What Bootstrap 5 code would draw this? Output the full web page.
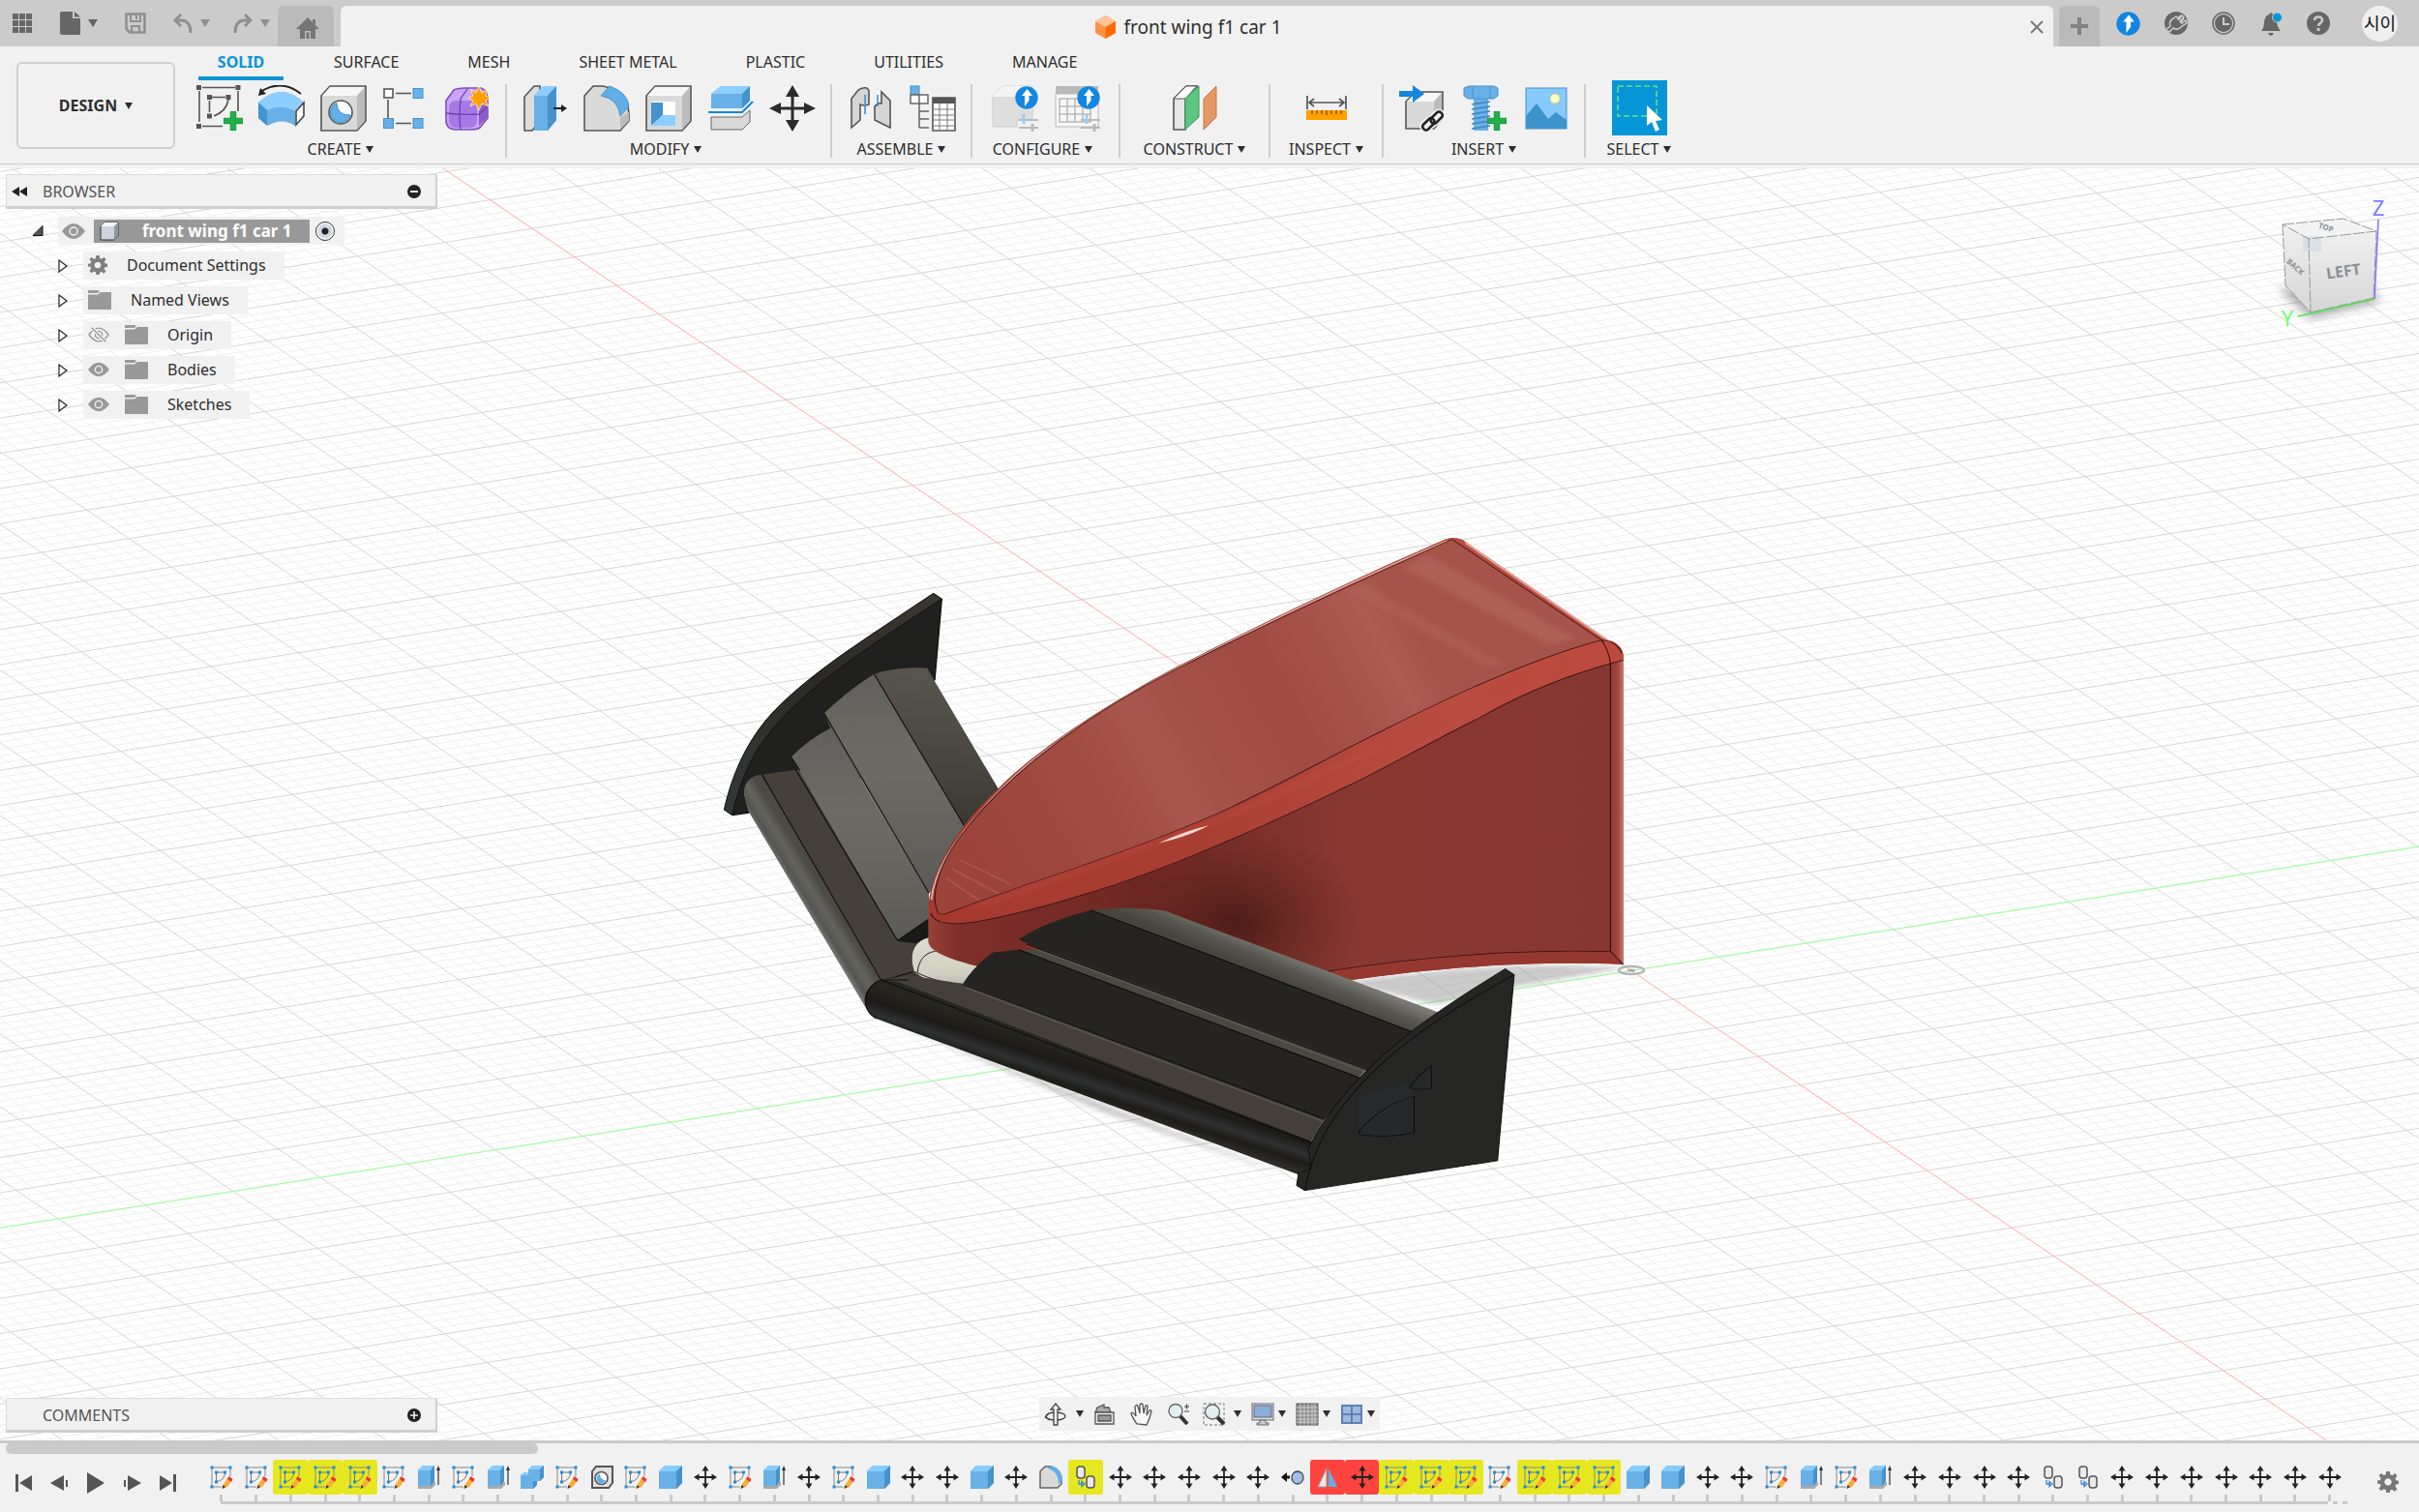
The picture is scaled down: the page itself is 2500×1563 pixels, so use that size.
<!DOCTYPE html>
<html lang="en">
<head>
<meta charset="utf-8">
<meta name="viewport" content="width=device-width, initial-scale=1">
<title>front wing f1 car 1</title>
<link href="https://cdn.jsdelivr.net/npm/bootstrap@5.3.0/dist/css/bootstrap.min.css" rel="stylesheet">
<style>
body{font-family:"Noto Sans","Noto Sans CJK KR",sans-serif;font-size:16px;line-height:24px;color:#2e2e2e;background:#f1f1f1;overflow:hidden}
svg{display:block;flex:none}
button.plain{background:none;border:0;padding:0;color:inherit;display:flex;align-items:center;justify-content:center}
/* top bar */
.appbar{height:48px;background:#cbcbcb}
.appbar .tools{width:287px;padding:12px 0 12px 12px}
.appbar .hometab{width:58px;height:42px;background:#bababa;border-radius:6px 6px 0 0;padding:4px 0 0 4px}
.doctab{height:42px;background:#f1f1f1;border-radius:6px 6px 0 0;margin:0 6px 0 7px;padding:2px 0 0 9px;font-size:19px}
.appbar .newtab{width:42px;height:42px;background:#bababa;border-radius:6px 6px 0 0}
.sysicons{width:330px;padding:0 22px 0 17px}
.appbar .avatar{width:37px;height:37px;border-radius:50%;background:#efefef;font-size:18px;color:#111;white-space:nowrap}
.caret{font-size:12px;line-height:12px}
.caret::before{content:"";display:block;border:5px solid transparent;border-top:8px solid currentColor;border-bottom:0}
.caret.sm::before{border-width:7px 4px 0}
.dim{color:#8f8f8f!important}
/* ribbon */
.ribbon{height:122px;border-bottom:1px solid #cfcfcf;margin-bottom:4px}
.ribbon .workspace{width:164px;height:90px;margin:16px 10px 0 17px;border:2px solid #cfcfcf;border-radius:6px;font-weight:700;gap:8px}
.rtabs{margin-left:14px;gap:33px;height:35px}
.rtabs .nav-link{color:#2e2e2e;padding:4px 19px 3px;line-height:24px;height:35px;border-bottom:4px solid transparent;text-align:center}
.rtabs .nav-link.active{color:#0696d7;font-weight:700;border-color:#0696d7;min-width:88px}
.grp{height:80px;position:relative}
.grp+.grp{border-left:2px solid #cdcdcd;height:76px;margin-top:4px}
.grp+.grp .icons{margin-top:-4px}
.icons{height:57px}
.icons .plain{width:64px;height:57px}
.w-create{width:331px;padding-right:3px}.w-modify{width:336px}.w-pair{width:145px}.w-conf{width:153px}.w-cons{width:155px}.w-insp{width:117px}.w-ins{width:209px}.w-sel{width:112px}
.grp button.lbl{gap:5px;height:28px}
.w-create button.lbl,.w-modify button.lbl,.w-conf button.lbl{padding-right:6px}
.icons .selbox{width:57px;background:#0696d7}
/* canvas */
.canvas{background:#fff;min-height:0}
.scene{position:absolute;inset:0;width:100%;height:100%}
.panel-bar{width:446px;height:36px;background:#f1f1f1;border:1px solid #ddd;border-right:2px solid #cfcfcf;border-bottom:3px solid #cfcfcf;color:#555;padding:2px 15px 0 5px}
.browser{position:absolute;left:6px;top:6px}
.comments{position:absolute;left:6px;bottom:8px}
.tree{margin:8px 0 0;gap:7px}
.trow{height:29px}
.trow .exp{width:25px;margin-left:55px;padding-right:18px}
.trow .chip{background:#f1f1f1;height:29px;padding:0 19px 2px 5px}
.trow.root .exp{width:25px;margin-left:20px;padding:0}
.trow.root .chip{padding:0 10px 0 4px;margin-left:9px}
.rootname{background:#999;color:#fff;height:24px;width:223px;font-size:17px;font-weight:700;padding:0 0 0 6px;margin:0 6px 0 9px}
.rootname svg{margin-right:24px}
.act{appearance:none;width:20px;height:20px;margin:0;border-radius:50%;border:1px solid #333;background:radial-gradient(circle,#222 0 3px,#cfd6e6 4px 7px,#fff 8px)}
.nav-tools{position:absolute;left:50%;margin-left:-176px;bottom:10px;width:352px;height:35px;background:#f1f1f1;padding:0 5px 0 4px}
.viewcube{position:absolute;top:20px;right:20px}
/* timeline */
.timeline{height:74px;border-top:3px solid #cacaca}
.thumb{width:22%;height:11px;background:#cacaca;border-radius:5px;margin-left:6px}
.play{width:204px;padding:0 22px 0 16px;height:60px}
.track{margin-left:7px;padding-top:6px}
.cell{flex:1 1 0;min-width:0}
.cell .plain{width:100%;height:36px;border-radius:3px}
.cell button.warn{background:#e6e81f}
.cell button.fail{background:#ff4440}
.tick{width:3px;height:7px;background:#cacaca;margin:0 auto}
.rail{margin-left:17px;height:3px;gap:5px}
.rail i{background:#cacaca;width:5px}
.gearbox{width:74px;padding:0 21px 2px 0}
</style>
<script src="https://cdn.jsdelivr.net/npm/bootstrap@5.3.0/dist/js/bootstrap.bundle.min.js"></script>
</head>
<body class="d-flex flex-column vh-100">

<svg width="0" height="0" class="position-absolute" aria-hidden="true">
<defs>
<symbol id="t-sk" viewBox="0 0 24 24"><path d="M2 2H21V11M2 2V22H12" fill="none" stroke="#888" stroke-width="1"/><path d="M6.500 7H15.500Q15.500 15 6.500 17Z" fill="none" stroke="#777" stroke-width="1"/><g fill="#1a8fe3"><path d="M.5.5h3v3h-3zM19.500.5h3v3h-3zM.5 20.500h3v3h-3zM5 5.500h3v3H5zM14 5.500h3v3h-3zM5 15.500h3v3H5z"/></g><path d="M13 24L14 19L19 12L23 15L18 22Z" fill="#f8ae38"/><path d="M19.500 11l4 3-1.500 3-4-3z" fill="#e33"/><path d="M12.500 24l1-4 2.500 2z" fill="#333"/></symbol>
<symbol id="t-box" viewBox="0 0 24 24"><path d="M0 6L6 0H24V18L18 24H0Z" fill="#69b0e6"/><path d="M0 6L6 0H24L18 6Z" fill="#86ccff"/><path d="M24 0V18L18 24V6Z" fill="#4592cc"/></symbol>
<symbol id="t-ext" viewBox="0 0 24 24"><path d="M1 21l4-4h14v3l-4 4H1z" fill="#aaa"/><path d="M1 5L6 0H18V16L14 21H1Z" fill="#69b0e6"/><path d="M1 5L6 0H18L14 5Z" fill="#86ccff"/><path d="M18 0V16L14 21V5Z" fill="#4592cc"/><path d="M22 20V3" stroke="#333" stroke-width="1.200"/><path d="M22 0l2 5h-4z" fill="#333"/></symbol>
<symbol id="t-join" viewBox="0 0 24 24"><path d="M0 10L4 7H8V4L12 0H24V12L20 16H17V20L13 24H0Z" fill="#69b0e6"/><path d="M8 4L12 0H24L20 4ZM0 10L4 7H8V10Z" fill="#86ccff"/><path d="M24 0V12L20 16V4ZM17 16V20L13 24V16Z" fill="#4592cc"/></symbol>
<symbol id="t-hole" viewBox="0 0 24 24"><path d="M2 6L6 1H23V18L19 23H2Z" fill="#e0e0e0" stroke="#555" stroke-width="2"/><circle cx="11.500" cy="13" r="6.500" fill="#fff" stroke="#555" stroke-width="1.600"/><path d="M10 8.500Q10 14 16 15.500A5 5 0 1 1 10 8.500Z" fill="#62aee6"/></symbol>
<symbol id="t-fil" viewBox="0 0 24 24"><path d="M1 6L6 1H12Q23 4 23 15V19L19 23H1Z" fill="#dadada" stroke="#666" stroke-width="1.500"/><path d="M9 3L13 0Q24 4 24 15L20 19Q20 6 9 3Z" fill="#62aee6"/></symbol>
<symbol id="t-mv" viewBox="0 0 24 24"><path d="M12 3V21M3 12H21" stroke="#222" stroke-width="1.800"/><path d="M12 0l3.500 5.500h-7zM12 24l3.500-5.500h-7zM0 12l5.500-3.500v7zM24 12l-5.500-3.500v7z" fill="#222"/></symbol>
<symbol id="t-cp" viewBox="0 0 24 24"><g fill="#e9e9ee" stroke="#555" stroke-width="1.500"><rect x="3" y="1" width="8" height="12" rx="3"/><rect x="13" y="11" width="8" height="12" rx="3"/></g><path d="M5 15v4h4M8 16.500l3 2.500-3 2.500z" fill="none" stroke="#3a86d8" stroke-width="1.300"/></symbol>
<symbol id="t-al" viewBox="0 0 24 24"><path d="M9 12H3" stroke="#111" stroke-width="3"/><path d="M0 12l6-5v10z" fill="#111"/><ellipse cx="17" cy="12.500" rx="6" ry="6.500" fill="#a3bfe8" stroke="#445" stroke-width="1.300"/></symbol>
<symbol id="t-mir" viewBox="0 0 24 24"><path d="M11 3V22H2Z" fill="#e8e8e8" stroke="#999"/><path d="M13 3V22H22Z" fill="#62aee6"/></symbol>
<symbol id="i-eye" viewBox="0 0 24 16"><path d="M0 8Q12-8 24 8Q12 24 0 8Z" fill="#999"/><circle cx="12" cy="8" r="4" fill="none" stroke="#f1f1f1" stroke-width="1.500"/></symbol>
<symbol id="i-hid" viewBox="0 0 24 16"><path d="M1 8Q12-7 23 8Q12 23 1 8Z" fill="none" stroke="#999" stroke-width="1.500"/><circle cx="12" cy="8" r="4" fill="none" stroke="#999" stroke-width="1.500"/><path d="M4 0L20 16" stroke="#f1f1f1" stroke-width="4"/><path d="M4 0L20 16" stroke="#999" stroke-width="1.500"/></symbol>
<symbol id="i-fold" viewBox="0 0 24 20"><path d="M0 4.500H10L13 2H24V20H0Z" fill="#999"/><path d="M0 0H10L12 1L10 3H0Z" fill="#999"/></symbol>
<symbol id="i-gear" viewBox="0 0 24 24"><path fill-rule="evenodd" d="M10 0h4l.6 3.600 2.100.9L19.700 2.300l2.600 2.600-2.100 3 .8 2.100 3 .6v3.600l-3.200.6-.8 2.100 2.200 3-2.600 2.600-3-2.100-2.100.9L14 24h-4l-.6-3.300-2.100-.9-3 2.100-2.600-2.600 2.200-3-.8-2.100L0 14v-3.600l3.100-.6.8-2.100-2.200-3L4.300 2.100l3 2.300 2.100-.9ZM12 8a4 4 0 1 0 .01 0Z"/></symbol>
<symbol id="i-up" viewBox="0 0 24 24"><circle cx="12" cy="12" r="11.700" fill="#1286e0"/><path d="M12.500 3L18 10H14.500V15L10 21V10H7Z" fill="#fff"/></symbol>
<symbol id="i-exp" viewBox="0 0 10 14"><path d="M1 1V13L9 7Z" fill="#fff" stroke="#222" stroke-width="1.200"/></symbol>
<symbol id="i-plus" viewBox="0 0 22 22"><path d="M8 0h6v8h8v6h-8v8H8v-8H0V8h8z" fill="#20b04b" stroke="#138a35"/></symbol>
</defs></svg>

<header class="appbar d-flex align-items-end">
  <div class="tools d-flex align-items-center h-100">
    <button class="plain" aria-label="Data panel"><svg width="22" height="22" fill="#666"><path d="M1 1h6v6H1zM8 1h6v6H8zM15 1h6v6h-6zM1 8h6v6H1zM8 8h6v6H8zM15 8h6v6h-6zM1 15h6v6H1zM8 15h6v6H8zM15 15h6v6h-6z"/></svg></button>
    <button class="plain ms-4 gap-2 text-black-50" aria-label="File"><svg class="ms-1" width="21" height="24" fill="#666"><path d="M2 0H13V7H21V24H2Q0 24 0 22V2Q0 0 2 0Z"/><path d="M15 0L21 5.500H15Z"/></svg><span class="caret"></span></button>
    <button class="plain ms-4" aria-label="Save"><svg class="ms-1" width="22" height="22" fill="none" stroke="#8f8f8f" stroke-width="2.500"><path d="M1.500 1.500H20.500V20.500H5L1.500 17Z"/><path d="M6 2V9H16V2M7 20V14H15V20M12 3V7" stroke-width="2"/></svg></button>
    <button class="plain dim ms-4" aria-label="Undo"><svg class="ms-1 me-2" width="20" height="20" fill="none" stroke="#8f8f8f" stroke-width="3"><path d="M8 1L2 7L8 13M2 7H9Q18 8 18 20"/></svg><span class="caret"></span></button>
    <button class="plain dim ms-4" aria-label="Redo"><svg class="me-2" width="20" height="20" fill="none" stroke="#8f8f8f" stroke-width="3"><path d="M12 1L18 7L12 13M18 7H11Q2 8 2 20"/></svg><span class="caret"></span></button>
  </div>
  <button class="plain hometab" aria-label="Home"><svg width="24" height="22" fill="#757575"><path d="M12 0L24 12H20V22H15V14H9V22H4V12H0Z"/><path d="M17 2h3v6l-3-3z"/><path d="M10.500 15.500h3V22h-3z"/></svg></button>
  <div class="doctab flex-fill d-flex align-items-center">
    <div class="flex-fill d-flex align-items-center justify-content-center gap-2"><svg width="21" height="24"><path d="M10.500 0L21 6V18L10.500 24L0 18V6Z" fill="#ff9248"/><path d="M10.500 0L21 6L10.500 12L0 6Z" fill="#ffc49c"/><path d="M21 6V18L10.500 24V12Z" fill="#ff6a00"/></svg><span>front wing f1 car 1</span></div>
    <button class="plain me-2" aria-label="Close"><svg width="18" height="18" stroke="#777" stroke-width="2"><path d="M3 3L15 15M15 3L3 15"/></svg></button>
  </div>
  <button class="plain newtab" aria-label="New tab"><svg width="20" height="20" fill="#828282"><path d="M8 1h4v7h7v4h-7v7H8v-7H1V8h7z"/></svg></button>
  <div class="sysicons d-flex align-items-center justify-content-between h-100">
    <button class="plain" aria-label="Updates"><svg width="25" height="25"><use href="#i-up"/></svg></button>
    <button class="plain" aria-label="Extensions"><svg width="24" height="24"><circle cx="12" cy="12" r="12" fill="#666"/><path d="M12 5L15 8L18 4L20 6L16 10L18 12L22 9L23 12L18 15Q14 20 9 17L5 21L1 19L6 15Q4 10 9 7Z" fill="none" stroke="#cbcbcb" stroke-width="1.500"/><path d="M13 8L17 4M16 11L20 7" stroke="#cbcbcb" stroke-width="2"/></svg></button>
    <button class="plain" aria-label="Job status"><svg width="24" height="24"><circle cx="12" cy="12" r="11" fill="none" stroke="#666" stroke-width="1.500"/><circle cx="12" cy="12" r="9" fill="#666"/><path d="M12 6V13H18" fill="none" stroke="#cbcbcb" stroke-width="2"/></svg></button>
    <button class="plain" aria-label="Notifications"><svg width="24" height="25"><path d="M2 20Q5 17 5 10Q6 4 10 3Q12-1 14 3Q18 5 18 11Q19 17 22 20Z" fill="#666"/><path d="M9 22h6q-1 3-3 3t-3-3z" fill="#666"/><circle cx="18.500" cy="6" r="5" fill="#0696d7" stroke="#cbcbcb"/></svg></button>
    <button class="plain" aria-label="Help"><svg width="24" height="24"><circle cx="12" cy="12" r="12" fill="#666"/><path d="M8 9Q8 5.500 12 5.500T16 9Q16 11 14 12T12 15" fill="none" stroke="#cbcbcb" stroke-width="2.600"/><path d="M10.500 17h3v3h-3z" fill="#cbcbcb"/></svg></button>
    <button class="plain avatar ms-2">시이</button>
  </div>
</header>

<div class="ribbon d-flex flex-shrink-0">
  <button class="plain workspace">DESIGN <span class="caret sm"></span></button>
  <div>
    <nav class="nav rtabs" aria-label="Toolbar tabs">
      <a class="nav-link active" href="#">SOLID</a><a class="nav-link" href="#">SURFACE</a><a class="nav-link" href="#">MESH</a><a class="nav-link" href="#">SHEET METAL</a><a class="nav-link" href="#">PLASTIC</a><a class="nav-link" href="#">UTILITIES</a><a class="nav-link" href="#">MANAGE</a>
    </nav>
    <div class="d-flex">
      <div class="grp w-create">
        <div class="icons d-flex justify-content-center">
          <button class="plain" aria-label="Create sketch"><svg width="48" height="48"><path d="M6 2.500H40M3 6V38M43 6V27M6 42.500H27M16 12.500H30M13.500 16V28M33 15Q31 27 18 32" fill="none" stroke="#555" stroke-width="1.600"/><path fill="#555" d="M0 0h5v5H0zM40.500 0h5v5h-5zM0 40h5v5H0zM11 10h5v5h-5zM30.500 10h5v5h-5zM11 29.500h5v5h-5z"/><use href="#i-plus" x="28" y="27" width="20" height="20"/></svg></button>
          <button class="plain" aria-label="Sweep"><svg width="48" height="48"><path d="M2 7Q24-7 44 9" fill="none" stroke="#222" stroke-width="1.800"/><path d="M0 11L2 3L8 9Z" fill="#222"/><path d="M0 18Q24-4 47 18L38 27V42Q24 33 10 42L0 34Z" fill="#69b0e6"/><path d="M0 18Q24-4 47 18L38 27Q24 19 9 26Z" fill="#8cceff"/><path d="M0 18L9 26V42L0 34Z" fill="#4592cc"/><path d="M39 27L47 18V32L39 41Z" fill="#fff" stroke="#444" stroke-width="1.600"/></svg></button>
          <button class="plain" aria-label="Hole"><svg width="48" height="48"><path d="M1 11L10 1H47V37L38 47H1Z" fill="#d9d9d9" stroke="#555" stroke-width="1.600"/><path d="M2 11L10 2H46L38 11Z" fill="#f7f7f7"/><path d="M46 2V37L38 46V11Z" fill="#bcbcbc"/><circle cx="21" cy="28" r="12" fill="#fff" stroke="#555" stroke-width="1.600"/><path d="M17 18.500Q17 31 31 31A10.500 10.500 0 1 1 17 18.500Z" fill="#62aee6" stroke="#4592cc"/></svg></button>
          <button class="plain" aria-label="Pattern"><svg width="48" height="48"><path d="M14 8.500H30M14 39.500H30M6 15V34" stroke="#555" stroke-width="1.600"/><rect x="2" y="4" width="9" height="9" fill="#fff" stroke="#555" stroke-width="1.600"/><g fill="#69b0e6" stroke="#4592cc"><rect x="32" y="3.500" width="10" height="10"/><rect x="1.500" y="34.500" width="10" height="10"/><rect x="32" y="34.500" width="10" height="10"/></g></svg></button>
          <button class="plain" aria-label="Create form"><svg width="48" height="48"><path d="M2 16L10 5Q14 3 22 3H38Q44 5 45 12V34L37 44Q34 46 28 46H12Q2 46 2 36Z" fill="#c9a4fb" stroke="#7d50bd" stroke-width="1.600"/><path d="M36 22L45 18V33L36 42Z" fill="#8c5ccb"/><rect x="5" y="16" width="29" height="28" rx="7" fill="#a679e6"/><path d="M2 29Q18 31 36 30L45 22M17 46Q15 30 17 14L24 4" fill="none" stroke="#6d43a8" stroke-width="1.300"/><path d="M36 1l3 7 6-4-2 7 5 2-5 3 3 6-7-3-3 7-3-7-6 3 3-6-5-3 5-2-3-7 6 4z" fill="#ffa000" stroke="#fff" stroke-width=".7"/></svg></button>
        </div>
        <button class="plain lbl w-100">CREATE <span class="caret sm"></span></button>
      </div>
      <div class="grp w-modify">
        <div class="icons d-flex justify-content-center">
          <button class="plain" aria-label="Press pull"><svg width="48" height="48"><path d="M3 12L13 1H19V36L11 47H3Z" fill="#ddd" stroke="#555" stroke-width="1.600"/><path d="M13 11L22 1H36V36L27 47H13Z" fill="#69b0e6"/><path d="M13 11L22 1H36L27 11Z" fill="#8cceff"/><path d="M36 1V36L27 47V11Z" fill="#4592cc"/><path d="M33 24H42" stroke="#222" stroke-width="2"/><path d="M47 24l-6-4v8z" fill="#222"/></svg></button>
          <button class="plain" aria-label="Fillet"><svg width="48" height="48"><path d="M1 11L10 1H20Q46 6 47 30V37L38 47H1Z" fill="#dadada" stroke="#555" stroke-width="1.600"/><path d="M47 28V37L38 46V33Z" fill="#bcbcbc"/><path d="M18 11L27 1Q46 8 47 22L38 32Q36 14 18 11Z" fill="#62aee6" stroke="#4592cc"/></svg></button>
          <button class="plain" aria-label="Shell"><svg width="48" height="48"><path d="M1 11L10 1H47V37L38 47H1Z" fill="#d9d9d9" stroke="#555" stroke-width="1.600"/><path d="M2 11L10 2H46L38 11Z" fill="#f7f7f7"/><path d="M46 2V37L38 46V11Z" fill="#bcbcbc"/><rect x="6" y="17" width="25" height="25" fill="#fff"/><path d="M6 18H18V31L6 42Z" fill="#4592cc"/><path d="M18 31H31V42H6Z" fill="#8cceff"/></svg></button>
          <button class="plain" aria-label="Split body"><svg width="48" height="48"><path d="M4 9L14 1H44V16L36 24H4Z" fill="#69b0e6"/><path d="M4 9L14 1H44L36 9Z" fill="#8cceff"/><path d="M44 1V16L36 24V9Z" fill="#4592cc"/><path d="M1 28H36L47 17" fill="none" stroke="#1286e0" stroke-width="2"/><path d="M4 33H36L44 26V38L36 46H4Z" fill="#d9d9d9" stroke="#666"/></svg></button>
          <button class="plain" aria-label="Move"><svg width="48" height="48"><path d="M24 6V42M6 24H42" stroke="#2b2b2b" stroke-width="3"/><path fill="#2b2b2b" d="M24 0l7 12H17zM24 48l7-12H17zM0 24l12-6v12zM48 24l-12-6v12z"/></svg></button>
        </div>
        <button class="plain lbl w-100">MODIFY <span class="caret sm"></span></button>
      </div>
      <div class="grp w-pair">
        <div class="icons d-flex justify-content-center">
          <button class="plain" aria-label="Joint"><svg width="48" height="48"><path d="M4 14L11 5Q20 0 22 6V20Q17 22 13 20V36L4 44Z" fill="#d5d5d5" stroke="#555" stroke-width="1.600"/><path d="M44 44L28 36V22Q31 18 35 19V7L44 16Z" fill="#d5d5d5" stroke="#555" stroke-width="1.600"/><path d="M18 10V30M31 10V22" stroke="#3d91dc" stroke-width="1.600"/></svg></button>
          <button class="plain" aria-label="Bill of materials"><svg width="48" height="48"><rect x="1" y="1" width="9" height="9" fill="#69b0e6" stroke="#4592cc"/><path d="M1 10H10V19H1ZM10 10H19V19H10Z" fill="#fff" stroke="#666" stroke-width="1.500"/><path d="M10 19V44M10 27H20M10 35H20M10 44H20" fill="none" stroke="#666" stroke-width="1.500"/><path d="M24 13H47V47H24Z" fill="#fff" stroke="#555" stroke-width="1.600"/><path d="M24 13H47V19H24Z" fill="#555"/><path d="M24 25H47M24 31H47M24 36H47M24 42H47M31 19V47M39 19V47" stroke="#777"/></svg></button>
        </div>
        <button class="plain lbl w-100">ASSEMBLE <span class="caret sm"></span></button>
      </div>
      <div class="grp w-conf">
        <div class="icons d-flex justify-content-center">
          <button class="plain" aria-label="Configure"><svg width="48" height="48"><path d="M1 12L11 1H42V36H26V43H1Z" fill="#dedede" stroke="#ccc"/><path d="M1 12L11 1H42L33 12Z" fill="#f5f5f5"/><path d="M28 36H48M28 44H48" stroke="#b9b9b9" stroke-width="2"/><path d="M33 30v10" stroke="#9ccbf2" stroke-width="3"/><path d="M42 40v9" stroke="#b9b9b9" stroke-width="3"/><use href="#i-up" x="24" y="1" width="24" height="24"/></svg></button>
          <button class="plain" aria-label="Configuration table"><svg width="48" height="48"><path d="M2 1H46V9H2Z" fill="#b9b9b9"/><path d="M2 9H46V43H2Z" fill="#f7f7f7" stroke="#b9b9b9"/><path d="M6 14H38V38H6ZM6 22H38M6 30H38M14 14V38M22 14V38M30 14V38" fill="none" stroke="#b9b9b9" stroke-width="1.500"/><path d="M28 36H48M28 44H48" stroke="#b9b9b9" stroke-width="2"/><path d="M34 30v10" stroke="#9ccbf2" stroke-width="3"/><path d="M42 40v9" stroke="#b9b9b9" stroke-width="3"/><use href="#i-up" x="24" y="1" width="24" height="24"/></svg></button>
        </div>
        <button class="plain lbl w-100">CONFIGURE <span class="caret sm"></span></button>
      </div>
      <div class="grp w-cons">
        <div class="icons d-flex justify-content-center">
          <button class="plain" aria-label="Offset plane"><svg width="48" height="48"><path d="M2 14L15 1H26L14 14V46H2Z" fill="#e6e6e6" stroke="#555" stroke-width="1.600"/><path d="M2 14L15 1H26L14 14Z" fill="#fff" stroke="#555"/><path d="M14 14L28 1V33L14 46Z" fill="#5ac67f" stroke="#3a9e5c"/><path d="M33 14L46 1V33L33 46Z" fill="#e59866" stroke="#c57a48"/></svg></button>
        </div>
        <button class="plain lbl w-100">CONSTRUCT <span class="caret sm"></span></button>
      </div>
      <div class="grp w-insp">
        <div class="icons d-flex justify-content-center">
          <button class="plain" aria-label="Measure"><svg width="48" height="48"><path d="M4 11V25M44 11V25M7 18H41M11 14L6 18L11 22M37 14L42 18L37 22" fill="none" stroke="#555" stroke-width="1.700"/><rect x="3" y="26" width="42" height="10" fill="#ffa000"/><path d="M9 26v4M14 26v4M19 26v4M24 26v5M29 26v4M34 26v4M39 26v4" stroke="#7a4d00" stroke-width="1.300"/></svg></button>
        </div>
        <button class="plain lbl w-100">INSPECT <span class="caret sm"></span></button>
      </div>
      <div class="grp w-ins">
        <div class="icons d-flex justify-content-center">
          <button class="plain" aria-label="Insert derive"><svg width="48" height="48"><path d="M7 17L17 7H45V35L36 45H7Z" fill="#d9d9d9" stroke="#555" stroke-width="1.600"/><path d="M8 17L17 8H44L36 17Z" fill="#f7f7f7"/><path d="M44 8V35L36 44V17Z" fill="#bcbcbc"/><path d="M0 6H14V0L26 9L14 18V12H0Z" fill="#1286e0"/><g fill="#f1f1f1" stroke="#f1f1f1" stroke-width="6"><rect x="23" y="37" width="14" height="7" rx="3" transform="rotate(-45 30 40)"/><rect x="32" y="30" width="14" height="7" rx="3" transform="rotate(-45 39 34)"/></g><g fill="none" stroke="#222" stroke-width="2.600"><rect x="23" y="37" width="14" height="7" rx="3" transform="rotate(-45 30 40)"/><rect x="32" y="30" width="14" height="7" rx="3" transform="rotate(-45 39 34)"/></g></svg></button>
          <button class="plain" aria-label="Insert fastener"><svg width="48" height="48"><path d="M13 12H28V47H13Z" fill="#69b0e6"/><path d="M11 20L30 17M11 25L30 22M11 30L30 27M11 35L30 32M11 40L30 37M11 45L30 42" stroke="#3d84bd" stroke-width="1.500"/><path d="M3 3L8 1H34L38 3V11L34 14H7L3 11Z" fill="#69b0e6" stroke="#4592cc"/><path d="M12 1V14M30 1V14" stroke="#4592cc"/><use href="#i-plus" x="27" y="27" width="20" height="20"/></svg></button>
          <button class="plain" aria-label="Insert image"><svg width="48" height="48"><rect x="3" y="3" width="42" height="42" fill="#86c9fa" stroke="#4592cc"/><circle cx="33" cy="14" r="5" fill="#fdfbc8" stroke="#cfd58a"/><path d="M3 32L14 19L26 35L34 28L45 36V45H3Z" fill="#3d93cc"/></svg></button>
        </div>
        <button class="plain lbl w-100">INSERT <span class="caret sm"></span></button>
      </div>
      <div class="grp w-sel">
        <div class="icons d-flex justify-content-center">
          <button class="plain selbox" aria-label="Select"><svg width="57" height="57"><rect x="6" y="6" width="40" height="31" fill="none" stroke="#66e07a" stroke-width="1.600" stroke-dasharray="6 3"/><path d="M36 26V47L41 43L45 53L49 51L45 42L52 41Z" fill="#fff"/></svg></button>
        </div>
        <button class="plain lbl w-100">SELECT <span class="caret sm"></span></button>
      </div>
    </div>
  </div>
</div>

<main class="canvas flex-fill position-relative overflow-hidden">
<svg class="scene" viewBox="0 174 2500 1315" preserveAspectRatio="xMidYMid slice" role="img" aria-label="Front wing model">
<defs>
<linearGradient id="topg" gradientUnits="userSpaceOnUse" x1="420" y1="620" x2="1180" y2="330"><stop offset="0" stop-color="#9c443a"/><stop offset=".3" stop-color="#a24d42"/><stop offset=".42" stop-color="#a9574d"/><stop offset=".52" stop-color="#a35045"/><stop offset=".7" stop-color="#a14b40"/><stop offset=".82" stop-color="#a65347"/><stop offset=".93" stop-color="#ac5b50"/><stop offset="1" stop-color="#a65449"/></linearGradient>
<linearGradient id="sideg" gradientUnits="userSpaceOnUse" x1="391" y1="0" x2="1454" y2="0"><stop offset="0" stop-color="#9a403a"/><stop offset=".04" stop-color="#7f2f2a"/><stop offset=".3" stop-color="#6f2823"/><stop offset=".5" stop-color="#7d322c"/><stop offset=".62" stop-color="#883831"/><stop offset="1" stop-color="#873731"/></linearGradient>
<radialGradient id="shd" gradientUnits="userSpaceOnUse" cx="870" cy="900" r="210"><stop offset="0" stop-color="#3a1412" stop-opacity=".7"/><stop offset=".5" stop-color="#481915" stop-opacity=".3"/><stop offset="1" stop-color="#5a201d" stop-opacity="0"/></radialGradient>
<linearGradient id="filg" gradientUnits="userSpaceOnUse" x1="400" y1="0" x2="1474" y2="0"><stop offset="0" stop-color="#a5392f"/><stop offset=".4" stop-color="#a93e33"/><stop offset=".7" stop-color="#b84b40"/><stop offset="1" stop-color="#bd4a3e"/></linearGradient>
<linearGradient id="edg"><stop offset="0" stop-color="#8d3a34"/><stop offset=".6" stop-color="#a5473e"/><stop offset="1" stop-color="#c77970"/></linearGradient>
<linearGradient id="tubeL" gradientUnits="userSpaceOnUse" x1="290" y1="990" x2="355" y2="950"><stop offset="0" stop-color="#77777a"/><stop offset=".25" stop-color="#555550"/><stop offset=".6" stop-color="#64645f"/><stop offset="1" stop-color="#4c4a45"/></linearGradient>
<linearGradient id="f3" gradientUnits="userSpaceOnUse" x1="600" y1="420" x2="800" y2="310"><stop offset="0" stop-color="#4b473f"/><stop offset=".75" stop-color="#4f4b44"/><stop offset="1" stop-color="#6b6a66"/></linearGradient>
<linearGradient id="f3b" x1="0" y1="0" x2="0" y2="1"><stop offset="0" stop-color="#5f5c55" stop-opacity=".6"/><stop offset="1" stop-color="#33312c" stop-opacity=".8"/></linearGradient>
<linearGradient id="f2" x1="0" y1="0" x2="0" y2="1"><stop offset="0" stop-color="#60605d"/><stop offset=".4" stop-color="#6e6b64"/><stop offset="1" stop-color="#5b5b57"/></linearGradient>
<linearGradient id="tubeR" gradientUnits="userSpaceOnUse" x1="650" y1="1205" x2="610" y2="1290"><stop offset="0" stop-color="#26251f"/><stop offset=".35" stop-color="#1b1a17"/><stop offset=".6" stop-color="#2f3132"/><stop offset=".8" stop-color="#1d1c18"/><stop offset="1" stop-color="#2c2b27"/></linearGradient>
<linearGradient id="fc" gradientUnits="userSpaceOnUse" x1="950" y1="970" x2="920" y2="1020"><stop offset="0" stop-color="#7a7973"/><stop offset=".5" stop-color="#585650"/><stop offset="1" stop-color="#47443d"/></linearGradient>
<linearGradient id="ivory" x1="0" y1="0" x2="0" y2="1"><stop offset="0" stop-color="#dedbd0"/><stop offset=".7" stop-color="#d2cfc3"/><stop offset="1" stop-color="#b5b4ab"/></linearGradient>
<linearGradient id="plate" gradientUnits="userSpaceOnUse" x1="200" y1="700" x2="700" y2="80"><stop offset="0" stop-color="#343636"/><stop offset=".5" stop-color="#2c2a26"/><stop offset="1" stop-color="#3a362f"/></linearGradient>
<filter id="soft" x="-20%" y="-20%" width="140%" height="140%"><feGaussianBlur stdDeviation="6"/></filter>
</defs>
<path id="minor" stroke="#f0f0f0" fill="none"/>
<path id="major" stroke="#d6d6d6" fill="none"/>
<path id="axis-x" stroke="#ffa8a8"/>
<path id="axis-y" stroke="#9dff9d" stroke-width="1.200"/>

<!-- left wing half -->
<g transform="translate(730 600) scale(.33333)" stroke-linejoin="round">
  <path d="M55 711C80 600 130 480 230 385C350 270 480 190 704 40L730 57L708 310L600 600L117 660L133 720L80 728Z" fill="#20201e"/>
  <path d="M55 711C80 600 130 480 230 385C350 270 480 190 704 40L730 57C450 240 290 350 190 480C130 550 95 660 80 728Z" fill="url(#plate)" stroke="#111" stroke-width="3"/>
  <path d="M730 57L708 310M80 728L133 720" stroke="#111" stroke-width="4"/>
  <path d="M172 602L277 587L310 587L640 1100L700 1130L660 1215L545 1245Z" fill="#45413a"/>
  <path d="M117 660C117 620 145 604 172 602L545 1242C510 1245 490 1280 494 1325L133 720Q120 690 117 660Z" fill="url(#tubeL)"/>
  <path d="M385 458L690 970V1055L593 1117L263 548Q320 490 385 458Z" fill="url(#f2)"/>
  <path d="M593 1117L690 1050V1112L650 1126L600 1120Z" fill="#191918"/>
  <path d="M365 412Q440 340 520 290L820 762L780 900L690 970L385 458Z" fill="url(#f2)"/>
  <path d="M520 290Q600 267 685 272L712 320L910 655L860 790L810 780Z" fill="url(#f3)"/>
  <path d="M520 290Q600 267 685 272L712 320L910 655L860 790L810 780Z" fill="url(#f3b)"/>
  <g fill="none" stroke="#111" stroke-width="3.500"><path d="M172 602L545 1245M277 587L593 1117M263 548L290 590M365 412L690 970M520 290L800 762M593 1117L690 1050M545 1242L640 1214"/></g>
  <path d="M545 1242L660 1213L820 1262L1000 1330L700 1330Z" fill="#3d3932"/>
  <path d="M690 1108C640 1120 628 1165 646 1215C690 1250 760 1268 835 1265L835 1190L700 1140Z" fill="url(#ivory)"/>
  <path d="M646 1213C700 1240 750 1252 800 1252M655 1215C658 1180 675 1155 710 1150M545 1250L660 1243" fill="none" stroke="#222" stroke-width="3"/>
</g>

<!-- nose cone and right wing half -->
<g transform="translate(700 540) scale(.66327 .45918)" stroke-linejoin="round">
  <path d="M1040 1035C1200 1000 1350 990 1480 1003L1310 1045L1180 1085Z" fill="#999" opacity=".5" filter="url(#soft)"/>
  <path d="M310 1112L965 1478L660 1325Z" fill="#888" opacity=".45" filter="url(#soft)"/>
  <path d="M1197 38C1210 33 1222 36 1228 44L1450 265C1468 270 1476 290 1474 308V995C1300 985 1150 1010 1050 1030L700 1030L470 1000C430 985 395 970 391 945V870C395 780 440 680 500 600C560 510 680 400 780 324C900 235 1050 130 1197 38Z" fill="url(#sideg)"/>
  <path d="M640 835Q760 780 900 690L1080 570V1028H600Z" fill="url(#shd)"/>
  <path d="M391 870C395 780 440 680 500 600C560 510 680 400 780 324C900 235 1050 130 1197 38C1210 33 1222 36 1228 44L1450 265C1468 270 1476 290 1474 310C1380 345 1310 390 1250 440C1180 490 1100 555 1050 590C980 638 920 680 850 722C780 765 710 805 640 835C580 862 520 885 470 898C430 908 400 905 395 880Z" fill="url(#filg)"/>
  <path d="M396 850C400 770 450 680 505 600C565 510 680 402 780 328C900 238 1050 133 1200 41" fill="none" stroke="#dba79f" stroke-width="3"/>
  <path d="M1228 46L1452 268" stroke="#e0a097" stroke-width="4"/>
  <path d="M407 880C395 850 400 780 450 690C520 560 640 430 780 329C900 240 1050 140 1207 38L1440 265C1370 292 1310 328 1250 365C1200 396 1150 432 1100 468C1020 525 940 590 850 650C780 695 700 738 620 778C550 812 480 848 420 880Q412 884 407 880Z" fill="url(#topg)" stroke="#3a1512" stroke-width="1.600"/>
  <path d="M1170 75L1400 262L1360 275L1130 100Z" fill="#c9897f" opacity=".25" filter="url(#soft)"/>
  <path d="M1070 140L1290 320L1270 330L1050 155Z" fill="#c9897f" opacity=".15" filter="url(#soft)"/>
  <path d="M418 800L470 850M428 780L500 835M440 760L520 815" stroke="#bf7167" stroke-width="4" opacity=".35"/>
  <path d="M470 865Q640 780 860 660Q980 585 1100 500" fill="none" stroke="#c9574b" stroke-width="9" opacity=".35" filter="url(#soft)"/>
  <path d="M750 722Q790 695 828 682Q800 705 750 722Z" fill="#f6d8d0"/>
  <path d="M1454 318Q1468 312 1474 308V995L1454 966Z" fill="url(#edg)"/>
  <path d="M1015 1010C1150 980 1300 960 1454 966L1474 995C1300 985 1150 1010 1050 1030Z" fill="#96382f"/>
  <path d="M395 880C400 905 430 908 470 898C520 885 580 862 640 835C710 805 780 765 850 722C920 680 980 638 1050 590C1100 555 1180 490 1250 440C1310 390 1380 345 1474 310M1440 265Q1452 290 1454 318V966L1474 995M1015 1010C1150 980 1300 960 1454 966M1440 265Q1462 266 1472 295" fill="none" stroke="#2e100e" stroke-width="1.700"/>

  <path d="M645 873C690 866 730 868 760 875L1190 1105L1145 1150Z" fill="url(#fc)"/>
  <path d="M532 938L560 915Q600 890 645 873L1150 1148L1075 1235L545 948Z" fill="#252420"/>
  <path d="M532 963L572 962L1075 1230L1060 1252Z" fill="#4b4841"/>
  <path d="M317 1030L360 1020L450 1040L1010 1340L985 1400Z" fill="#444039"/>
  <path d="M445 1038Q465 995 492 968L532 962L1065 1250L1008 1345Z" fill="#252420"/>
  <path d="M317 1030C290 1045 283 1095 310 1117L975 1472L1000 1465L1000 1400L345 1035Z" fill="url(#tubeR)"/>
  <path d="M310 1117C283 1095 290 1045 317 1030L988 1397M317 1030H360M445 1040L1008 1343M532 962L1062 1250M545 950L1075 1232M645 873L1145 1147" fill="none" stroke="#0c0c0b" stroke-width="2"/>
  <path d="M450 1048L1005 1348M545 953L1072 1237" stroke="#77756e" stroke-width="1"/>
  <path d="M1290 1005L1304 1018L1278 1437L978 1504L965 1493L968 1465L988 1455L983 1410C1010 1330 1060 1240 1145 1145C1190 1095 1240 1050 1290 1005Z" fill="#262624" stroke="#111" stroke-width="1.600"/>
  <path d="M978 1504C990 1400 1030 1300 1120 1190C1180 1120 1240 1070 1304 1018" fill="none" stroke="#0d0d0c" stroke-width="1.600"/>
  <path d="M1062 1292L1145 1258V1380H1062Z" fill="#272c2e" opacity=".8"/>
  <path d="M1062 1370C1080 1340 1110 1305 1148 1292V1374C1120 1384 1080 1382 1064 1379ZM1141 1272C1150 1250 1165 1235 1175 1222V1275C1160 1278 1145 1277 1141 1272Z" fill="#25292a" stroke="#0d0d0c" stroke-width="1.600"/>
</g>
<ellipse cx="1686" cy="1003" rx="13" ry="4" fill="none" stroke="#b5b5b5" stroke-width="2.500"/>
<ellipse cx="1686" cy="1003" rx="4" ry="1.500" fill="#aaa"/>
</svg>

<section class="browser" aria-label="Browser">
  <div class="panel-bar d-flex align-items-center"><button class="plain" aria-label="Collapse"><svg width="16" height="10" fill="#222"><path d="M8 0V10L0 5ZM16 0V10L8 5Z"/></svg></button><span class="ms-3">BROWSER</span><button class="plain ms-auto" aria-label="Minimize"><svg width="14" height="14"><circle cx="7" cy="7" r="7" fill="#222"/><path d="M3 7H11" stroke="#f1f1f1" stroke-width="2"/></svg></button></div>
  <ul class="tree list-unstyled d-flex flex-column">
    <li class="trow root d-flex align-items-center"><button class="plain exp" aria-label="Collapse"><svg width="12" height="11"><path d="M11 .5V10.500H1Z" fill="#555" stroke="#111"/></svg></button><div class="chip d-flex align-items-center"><button class="plain" aria-label="Toggle visibility"><svg width="24" height="16"><use href="#i-eye"/></svg></button><div class="rootname d-flex align-items-center"><svg width="20" height="20"><path d="M1 5L5 1H19V15L15 19H1Z" fill="#cdd3de" stroke="#333"/><path d="M1 5L5 1H19L15 5Z" fill="#f4f6fa"/><path d="M19 1V15L15 19V5Z" fill="#8f97a5"/></svg>front wing f1 car 1</div><input class="act" type="radio" checked aria-label="Activate component"></div></li>
    <li class="trow d-flex align-items-center"><button class="plain exp" aria-label="Expand"><svg width="10" height="14"><use href="#i-exp"/></svg></button><div class="chip d-flex align-items-center"><svg width="20" height="20" fill="#808080"><use href="#i-gear"/></svg><span class="ms-3 ps-1">Document Settings</span></div></li>
    <li class="trow d-flex align-items-center"><button class="plain exp" aria-label="Expand"><svg width="10" height="14"><use href="#i-exp"/></svg></button><div class="chip d-flex align-items-center"><svg width="24" height="20"><use href="#i-fold"/></svg><span class="ms-3 ps-1">Named Views</span></div></li>
    <li class="trow d-flex align-items-center"><button class="plain exp" aria-label="Expand"><svg width="10" height="14"><use href="#i-exp"/></svg></button><div class="chip d-flex align-items-center"><svg class="me-3" width="22" height="16"><use href="#i-hid"/></svg><svg width="24" height="20"><use href="#i-fold"/></svg><span class="ms-3 ps-1">Origin</span></div></li>
    <li class="trow d-flex align-items-center"><button class="plain exp" aria-label="Expand"><svg width="10" height="14"><use href="#i-exp"/></svg></button><div class="chip d-flex align-items-center"><svg class="me-3" width="22" height="16"><use href="#i-eye"/></svg><svg width="24" height="20"><use href="#i-fold"/></svg><span class="ms-3 ps-1">Bodies</span></div></li>
    <li class="trow d-flex align-items-center"><button class="plain exp" aria-label="Expand"><svg width="10" height="14"><use href="#i-exp"/></svg></button><div class="chip d-flex align-items-center"><svg class="me-3" width="22" height="16"><use href="#i-eye"/></svg><svg width="24" height="20"><use href="#i-fold"/></svg><span class="ms-3 ps-1">Sketches</span></div></li>
  </ul>
</section>

<svg class="viewcube" width="140" height="156" viewBox="2340 194 140 156" role="img" aria-label="View cube">
  <defs><linearGradient id="cf" x1="0" y1="0" x2="0" y2="1"><stop offset="0" stop-color="#f0f0f0"/><stop offset="1" stop-color="#d6d6d6"/></linearGradient><filter id="cs" x="-30%" y="-50%" width="160%" height="200%"><feGaussianBlur stdDeviation="5"/></filter></defs>
  <path d="M2354 298L2388 330L2460 312L2450 296Z" fill="#777" opacity=".55" filter="url(#cs)"/>
  <path d="M2359 232L2422 226L2456 239L2386 247Z" fill="#f3f3f3"/>
  <path d="M2359 232L2386 247L2388 323L2362 295Z" fill="url(#cf)"/>
  <path d="M2386 247L2456 239L2453 308L2388 323Z" fill="url(#cf)"/>
  <path d="M2380 244h19v16h-19z" fill="#c8d2e2" opacity=".45"/>
  <path d="M2359 232L2422 226L2456 239L2386 247ZM2359 232L2362 295L2388 323L2386 247M2388 323L2453 308L2456 239" fill="none" stroke="#999" stroke-width="1" stroke-dasharray="12 2"/>
  <path d="M2458 227L2454 309" stroke="#7d7dff" stroke-width="1.600"/><path d="M2375 327L2454 309" stroke="#4de64d" stroke-width="1.600"/>
  <g fill="#8d9094" font-family="Noto Sans" font-weight="700" text-anchor="middle">
    <text x="2422" y="286" font-size="16" transform="rotate(-8 2422 281)">LEFT</text>
    <text x="2373" y="279" font-size="8" transform="rotate(42 2373 275)">BACK</text>
    <text x="2404" y="238" font-size="8" transform="rotate(18 2404 235)">TOP</text>
  </g>
  <text x="2458" y="223" font-size="22" fill="#7d7dff" text-anchor="middle" font-family="Noto Sans">Z</text>
  <text x="2364" y="337" font-size="22" fill="#6dff6d" text-anchor="middle" font-family="Noto Sans">Y</text>
</svg>

<section class="comments panel-bar d-flex align-items-center" aria-label="Comments"><span class="ms-4 ps-2">COMMENTS</span><button class="plain ms-auto" aria-label="Add comment"><svg width="14" height="14"><circle cx="7" cy="7" r="7" fill="#222"/><path d="M3 7H11M7 3V11" stroke="#f1f1f1" stroke-width="1.600"/></svg></button></section>

<div class="nav-tools d-flex align-items-center justify-content-between">
  <button class="plain gap-2" aria-label="Orbit"><svg width="26" height="24" fill="none" stroke="#444" stroke-width="1.300"><ellipse cx="13" cy="14" rx="10" ry="4"/><path d="M11 23V7H8L13 1L18 7H15V23Z" fill="#eee"/><path d="M2 15l4-4M2 15l5 3"/></svg><span class="caret sm"></span></button>
  <button class="plain me-1" aria-label="Look at"><svg width="24" height="24" stroke="#555" stroke-width="1.300"><path d="M2 10L4 5L11 2V5H16L18 10Z" fill="#aaa"/><path d="M2 10H21V22H2Z" fill="#eee"/><path d="M5 13H18V19H5Z" fill="#999"/></svg></button>
  <button class="plain" aria-label="Pan"><svg width="24" height="24"><path d="M7 22Q2 15 1 11Q3 9 6 14L5 4Q7 1 8 4L10 11L10 2Q12 0 13 2L14 11L16 3Q18 2 18 4L17 13L20 8Q22 7 22 9Q20 17 17 23Z" fill="#f8f8f8" stroke="#555" stroke-width="1.300"/></svg></button>
  <button class="plain ms-1" aria-label="Zoom"><svg width="24" height="24"><path d="M13 13L21 22" stroke="#333" stroke-width="4"/><circle cx="9" cy="8.500" r="7" fill="#e3eeee" stroke="#666" stroke-width="1.400"/><path d="M18 4h5M20.500 1.500v5M18 9h5" stroke="#444" stroke-width="1.200"/></svg></button>
  <button class="plain ms-1" aria-label="Fit"><svg width="24" height="24"><rect x="1" y="1" width="21" height="22" fill="none" stroke="#777" stroke-dasharray="3 2"/><path d="M14 14L22 22" stroke="#333" stroke-width="4"/><circle cx="10" cy="9.500" r="7.500" fill="#e3eeee" stroke="#666" stroke-width="1.400"/></svg><span class="caret sm ms-2"></span></button>
  <button class="plain" aria-label="Display settings"><svg width="24" height="24" stroke="#667"><rect x="1" y="1" width="22" height="17" fill="#ddd"/><rect x="3" y="3" width="18" height="12" fill="#8badd9"/><path d="M9 18H15V21H18V23H6V21H9Z" fill="#ccc"/></svg><span class="caret sm ms-1"></span></button>
  <button class="plain" aria-label="Grid and snaps"><svg width="24" height="24"><rect x="1" y="1" width="22" height="22" fill="#8c8c8c" stroke="#555"/><path d="M1 5H23M1 9H23M1 13H23M1 17H23M1 20H23M5 1V23M9 1V23M13 1V23M17 1V23M20 1V23" stroke="#ddd" stroke-width=".8"/></svg><span class="caret sm ms-1"></span></button>
  <button class="plain" aria-label="Viewports"><svg width="24" height="24"><rect x="1" y="2" width="22" height="20" fill="#5f7fae"/><path d="M3 4h8v7H3zM13 4h8v7h-8zM3 13h8v7H3zM13 13h8v7h-8z" fill="#9db9e0"/></svg><span class="caret sm ms-1"></span></button>
</div>
</main>

<footer class="timeline flex-shrink-0">
  <div class="thumb"></div>
  <div class="d-flex">
    <div class="play d-flex align-items-center justify-content-between flex-shrink-0">
      <button class="plain" aria-label="To start"><svg width="17" height="18" fill="#555"><path d="M0 0H3V18H0ZM17 1V17L4 9Z"/></svg></button>
      <button class="plain" aria-label="Step back"><svg width="19" height="18" fill="#555"><path d="M14 1V17L0 9ZM16 6H18V13H16Z"/></svg></button>
      <button class="plain" aria-label="Play"><svg width="18" height="22" fill="#555"><path d="M0 0V22L18 11Z"/></svg></button>
      <button class="plain" aria-label="Step forward"><svg width="19" height="18" fill="#555"><path d="M5 1V17L19 9ZM1 6H3V13H1Z"/></svg></button>
      <button class="plain" aria-label="To end"><svg width="17" height="18" fill="#555"><path d="M14 0H17V18H14ZM0 1V17L13 9Z"/></svg></button>
    </div>
    <div class="track flex-fill">
      <div class="d-flex" id="cells"></div>
      <div class="rail d-flex"><i class="flex-fill"></i><i></i><i></i></div>
    </div>
    <div class="gearbox d-flex align-items-center justify-content-end flex-shrink-0"><button class="plain" aria-label="Timeline settings"><svg width="22" height="22" fill="#777"><use href="#i-gear"/></svg></button></div>
  </div>
</footer>

<script>
// timeline features; "!" marks a warning and a trailing "x" a failed feature
const features = ("sk sk sk! sk! sk! sk ext sk ext join sk hole sk box mv sk ext mv sk box mv mv box mv fil cp! mv mv mv mv mv al mirx mvx " +
  "sk! sk! sk! sk sk! sk! sk! box box mv mv sk ext sk ext mv mv mv mv cp cp mv mv mv mv mv mv mv").split(" ");
document.getElementById("cells").innerHTML = features.map(f => {
  const state = f.endsWith("!") ? "warn" : f.endsWith("x") && f !== "box" ? "fail" : "";
  const name = state ? f.slice(0, -1) : f;
  return `<div class="cell"><button class="plain ${state}" aria-label="Feature ${name}"><svg width="24" height="24"><use href="#t-${name}"/></svg></button><div class="tick"></div></div>`;
}).join("");

// ground grid: two line families through the origin, five minor steps to each major one
const ox = 1686, oy = 1003.5, kx = .6755, ky = -.1577, stepX = 111.4, stepY = 36.4;
let major = "", minor = "";
const lineX = c => `M${(c + (174 - oy) / kx).toFixed(1)} 174L${(c + (1489 - oy) / kx).toFixed(1)} 1489`;
const lineY = c => `M0 ${(c - ox * ky).toFixed(1)}L2500 ${(c + (2500 - ox) * ky).toFixed(1)}`;
for (let i = -110; i <= 110; i++) {
  if (i) i % 5 ? minor += lineX(ox + i * stepX / 5) : major += lineX(ox + i * stepX / 5);
}
for (let i = -150; i <= 150; i++) {
  if (i) i % 5 ? minor += lineY(oy + i * stepY / 5) : major += lineY(oy + i * stepY / 5);
}
document.getElementById("minor").setAttribute("d", minor);
document.getElementById("major").setAttribute("d", major);
document.getElementById("axis-x").setAttribute("d", lineX(ox));
document.getElementById("axis-y").setAttribute("d", lineY(oy));
</script>
</body>
</html>
